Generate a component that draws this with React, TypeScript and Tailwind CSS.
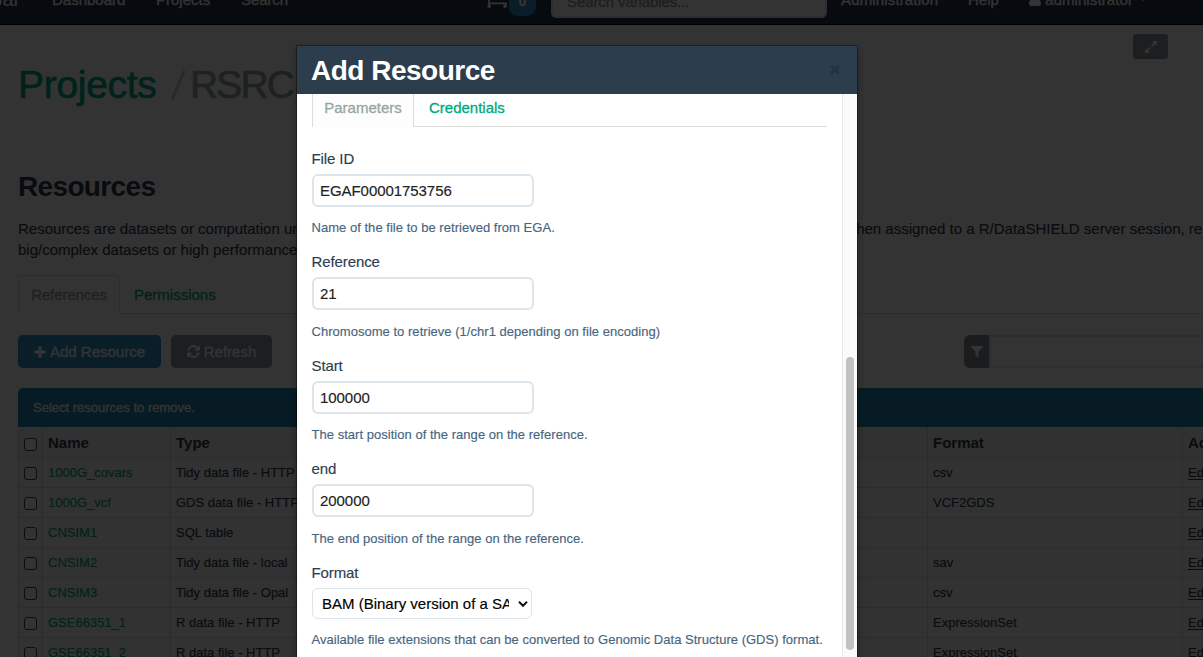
import React from "react";

const rows = [
  { name: "1000G_covars", type: "Tidy data file - HTTP", format: "csv" },
  { name: "1000G_vcf", type: "GDS data file - HTTP", format: "VCF2GDS" },
  { name: "CNSIM1", type: "SQL table", format: "" },
  { name: "CNSIM2", type: "Tidy data file - local", format: "sav" },
  { name: "CNSIM3", type: "Tidy data file - Opal", format: "csv" },
  { name: "GSE66351_1", type: "R data file - HTTP", format: "ExpressionSet" },
  { name: "GSE66351_2", type: "R data file - HTTP", format: "ExpressionSet" },
];

const fields = [
  { label: "File ID", value: "EGAF00001753756", help: "Name of the file to be retrieved from EGA." },
  { label: "Reference", value: "21", help: "Chromosome to retrieve (1/chr1 depending on file encoding)" },
  { label: "Start", value: "100000", help: "The start position of the range on the reference." },
  { label: "end", value: "200000", help: "The end position of the range on the reference." },
];

function RefreshIcon() {
  return (
    <svg className="mr-[4px] h-[15px] w-[13px] shrink-0" viewBox="0 0 1536 1792" fill="currentColor">
      <path d="M1511 1056q0 5-1 7-64 268-268 434.500t-478 166.500q-146 0-282.500-55t-243.500-157l-129 129q-19 19-45 19t-45-19-19-45v-448q0-26 19-45t45-19h448q26 0 45 19t19 45-19 45l-137 137q71 66 161 102t187 36q134 0 250-65t186-179q11-17 53-117 8-23 30-23h192q13 0 22.500 9.500t9.500 22.500zm25-800v448q0 26-19 45t-45 19h-448q-26 0-45-19t-19-45 19-45l138-138q-148-137-349-137-134 0-250 65t-186 179q-11 17-53 117-8 23-30 23h-199q-13 0-22.500-9.500t-9.500-22.500v-7q65-268 270-434.500t480-166.500q146 0 284 55.500t245 156.500l130-129q19-19 45-19t45 19 19 45z" />
    </svg>
  );
}

function NavBar() {
  return (
    <nav className="h-[25px] w-full overflow-hidden border-b border-black bg-[#26374d] text-white">
      <div className="-mt-[26px] flex h-[50px] items-center whitespace-nowrap [-webkit-text-stroke:0.3px]">
        <div className="flex w-[18px] justify-end text-[20px] [-webkit-text-stroke:0px]">
          <span>Opal</span>
        </div>
        <span className="ml-[34px] w-[104px]">Dashboard</span>
        <span className="w-[85px]">Projects</span>
        <span className="w-[246px] tracking-[-0.1px]">Search</span>
        <svg className="h-[18px] w-[20px]" viewBox="0 0 20 18" fill="none" stroke="currentColor" strokeWidth="1.800">
          <path d="M0 1h2v14M4 3h15l-1 6H3M2 13.300h17v2" />
          <circle cx="2.200" cy="16.200" r="1.800" fill="currentColor" stroke="none" />
          <circle cx="18" cy="16.200" r="1.800" fill="currentColor" stroke="none" />
        </svg>
        <span className="ml-[2px] mt-[2px] flex h-[32px] w-[27px] items-center justify-center rounded-[9px] bg-[#2c8fc4] pt-[3px] text-[14px] font-bold">
          0
        </span>
        <span className="ml-[15px] mt-[2px] flex h-[35px] w-[276px] items-center rounded-[5px] border-2 border-[#dce4ec] bg-white pl-[14px] pt-[2px] tracking-[-0.1px] text-[#8b979b]">
          Search variables...
        </span>
        <span className="ml-[14px] w-[127px] tracking-[0.15px]">Administration</span>
        <span className="w-[61px]">Help</span>
        <svg className="mt-[1px] h-[12px] w-[12px]" viewBox="0 0 12 12" fill="currentColor">
          <circle cx="6" cy="3" r="3" />
          <path d="M0 9.500C0 7 1.500 5.500 3 5.500h6c1.500 0 3 1.500 3 4 0 1.700-1 2.500-2.200 2.500H2.200C1 12 0 11.200 0 9.500Z" />
        </svg>
        <span className="ml-[4px] w-[94px] tracking-[0.1px]">administrator</span>
        <svg className="h-[4px] w-[8px]" viewBox="0 0 8 4" fill="currentColor">
          <path d="M0 0h8L4 4Z" />
        </svg>
      </div>
    </nav>
  );
}

function Check({ className = "mt-px" }: { className?: string }) {
  return (
    <span className={`block h-[13px] w-[13px] rounded-[3px] border border-[#404040] bg-white ${className}`} />
  );
}

function ResourceTable() {
  return (
    <div className="ml-[18px] w-[1240px] text-[13px]">
      <div className="grid h-[31px] grid-cols-[24px_128px_757px_255px_76px] border-b border-l border-[#dddddd] bg-[#f4f4f4] text-[15px] font-bold">
        <div className="flex items-center border-r border-[#dddddd] pl-[5px]"><Check className="mt-[5px]" /></div>
        <div className="flex items-center border-r border-[#dddddd] pl-[5px]">Name</div>
        <div className="flex items-center border-r border-[#dddddd] pl-[5px]">Type</div>
        <div className="flex items-center border-r border-[#dddddd] pl-[5px]">Format</div>
        <div className="flex items-center pl-[5px]">Actions</div>
      </div>
      {rows.map((r) => (
        <div
          key={r.name}
          className="grid h-[30px] grid-cols-[24px_128px_757px_255px_76px] border-b border-l border-[#dddddd] odd:bg-[#fbfbfb] even:bg-[#f7f7f7] [-webkit-text-stroke:0.15px]"
        >
          <div className="flex items-center border-r border-[#dddddd] pl-[5px]"><Check /></div>
          <div className="flex items-center border-r border-[#dddddd] pl-[5px] text-[#00aa80]">{r.name}</div>
          <div className="flex items-center border-r border-[#dddddd] pl-[5px]">{r.type}</div>
          <div className="flex items-center border-r border-[#dddddd] pl-[5px]">{r.format}</div>
          <div className="flex items-center pl-[5px] underline underline-offset-2">Edit</div>
        </div>
      ))}
    </div>
  );
}

function Page() {
  return (
    <div className="h-[657px] w-[1203px] overflow-hidden bg-white">
      <NavBar />
      <div className="flex h-[135px] justify-between pl-[18px] pr-[35px]">
        <h1 className="mt-[34px] flex h-[50px] items-center whitespace-nowrap text-[39px] tracking-[-0.3px] [-webkit-text-stroke:0.7px]">
          <span className="w-[153px] text-[#00aa80]">Projects</span>
          <svg className="mt-[1px] h-[30px] w-[15px]" viewBox="0 0 15 30">
            <path d="M1 29.500 13.500 0.500" stroke="#cccccc" strokeWidth="3" />
          </svg>
          <span className="ml-[4px] tracking-[-1.900px] text-[#95a5a6]">RSRC</span>
        </h1>
        <button className="mt-[9px] flex h-[25px] w-[35px] items-center justify-center rounded-[3px] bg-[#8b959a] text-white">
          <svg className="h-[14px] w-[12px]" viewBox="0 0 1536 1792" fill="currentColor">
            <path d="M755 1056q0 13-10 23l-332 332 144 144q19 19 19 45t-19 45-45 19h-448q-26 0-45-19t-19-45v-448q0-26 19-45t45-19 45 19l144 144 332-332q10-10 23-10t23 10l114 114q10 10 10 23zm781-864v448q0 26-19 45t-45 19-45-19l-144-144-332 332q-10 10-23 10t-23-10l-114-114q-10-10-10-23t10-23l332-332-144-144q-19-19-19-45t19-45 45-19h448q26 0 45 19t19 45z" />
          </svg>
        </button>
      </div>
      <h2 className="ml-[18px] mt-[11px] flex h-[30px] items-center text-[28px] font-bold tracking-[-0.650px]">Resources</h2>
      <div className="ml-[18px] mt-[17px] whitespace-nowrap leading-[21px] [-webkit-text-stroke:0.150px]">
        <div className="flex">
          <span className="w-[824px] shrink-0 overflow-hidden">
            Resources are datasets or computation units which location is described by a URL and access is protected by credentials.
          </span>
          <span>When assigned to a R/DataSHIELD server session, remote</span>
        </div>
        <div>big/complex datasets or high performance computers are made accessible to data analysts.</div>
      </div>
      <div className="ml-[18px] mt-[15px] flex h-[39px]">
        <div className="flex w-[102px] items-center justify-center rounded-t-[4px] border border-b-0 border-[#dddddd] pb-px tracking-[-0.1px] text-[#95a5a6] [-webkit-text-stroke:0.300px]">
          References
        </div>
        <div className="flex flex-1 items-center border-b border-[#dddddd] pl-[14px] text-[#00aa80] [-webkit-text-stroke:0.300px]">
          Permissions
        </div>
      </div>
      <div className="mt-[21px] flex h-[33px] whitespace-nowrap pl-[18px]">
        <button className="flex w-[143px] shrink-0 items-center justify-center rounded-[5px] bg-[#3498cb] text-white [-webkit-text-stroke:0.300px]">
          <svg className="mr-[4px] h-[12px] w-[12px] shrink-0" viewBox="0 0 12 12">
            <path d="M6 0.300v11.400M0.300 6h11.400" stroke="currentColor" strokeWidth="3" />
          </svg>
          Add Resource
        </button>
        <button className="ml-[10px] flex w-[101px] shrink-0 items-center justify-center rounded-[5px] bg-[#8b959a] text-white [-webkit-text-stroke:0.300px]">
          <RefreshIcon />
          Refresh
        </button>
        <div className="ml-[692px] flex w-[25px] shrink-0 items-center justify-center rounded-l-[6px] bg-[#838c91] text-white">
          <svg className="h-[12px] w-[12px]" viewBox="0 0 12 12" fill="currentColor">
            <path d="M0 0h12v1L7.500 5.600V12L4.500 9.300V5.600L0 1Z" />
          </svg>
        </div>
        <div className="w-[270px] shrink-0 border-2 border-[#dce4ec] bg-white" />
      </div>
      <div className="ml-[18px] mt-[20px] flex h-[39px] w-[1240px] items-center rounded-t-[5px] bg-[#2586b4] pl-[15px] text-[13px] text-white [-webkit-text-stroke:0.300px]">
        Select resources to remove.
      </div>
      <ResourceTable />
    </div>
  );
}

function Modal() {
  return (
    <div
      role="dialog"
      className="absolute left-[297px] top-[46px] flex h-[640px] w-[560px] flex-col bg-white shadow-[0_0_0_1px_rgba(0,0,0,0.35),0_3px_7px_rgba(0,0,0,0.4)]"
    >
      <div className="flex h-[48px] shrink-0 items-center justify-between bg-[#2c3e4e] pl-[14px] pr-[17px]">
        <h3 className="text-[28px] font-bold tracking-[-0.500px] text-white">Add Resource</h3>
        <svg className="h-[10px] w-[10px]" viewBox="0 0 10 10">
          <path d="M1 1l8 8M9 1l-8 8" stroke="#22323f" strokeWidth="2.600" />
        </svg>
      </div>
      <div className="flex flex-1">
        <div className="w-[545px] pl-[15px] pr-[15px]">
          <div className="flex h-[33px]">
            <div className="flex w-[102px] justify-center border-l border-r border-[#dddddd] bg-[#fdfdfd] pt-[3px] text-[#95a5a6] [-webkit-text-stroke:0.300px]">
              Parameters
            </div>
            <div className="flex-1 border-b border-[#dddddd] pl-[15px] pt-[3px] text-[#00aa80] [-webkit-text-stroke:0.300px]">
              Credentials
            </div>
          </div>
          <div className="mt-[20.500px] [-webkit-text-stroke:0.150px]">
            {fields.map((f) => (
              <div key={f.label} className="h-[103.500px]">
                <label className="-ml-[0.500px] block tracking-[-0.100px]">{f.label}</label>
                <input
                  readOnly
                  value={f.value}
                  className="mt-[5.250px] block h-[33px] w-[222px] rounded-[6px] border-2 border-[#dce4ec] bg-white px-[6px] tracking-[-0.060px] text-[#222222] outline-none"
                />
                <p className="-ml-[0.500px] mt-[11.250px] text-[13px] leading-[20px] tracking-[0.030px] text-[#476581]">{f.help}</p>
              </div>
            ))}
            <div>
              <label className="-ml-[0.500px] block tracking-[-0.100px]">Format</label>
              <div className="mt-[5.500px] flex h-[31px] w-[220px] items-center rounded-[6px] border border-[#dce4ec] pl-[9px] pr-[4px] text-black">
                <span className="w-[187px] shrink-0 overflow-hidden whitespace-nowrap">BAM (Binary version of a SAM)</span>
                <svg className="ml-[9px] h-[8px] w-[10px] shrink-0" viewBox="0 0 10 8">
                  <path d="M1 1.800 5 5.800 9 1.800" fill="none" stroke="#111111" strokeWidth="2" />
                </svg>
              </div>
              <p className="-ml-[0.500px] mt-[11px] whitespace-nowrap text-[13px] leading-[20px] tracking-[0.025px] text-[#476581]">
                Available file extensions that can be converted to Genomic Data Structure (GDS) format.
              </p>
            </div>
          </div>
        </div>
        <div className="w-[15px] border-l border-[#e8e8e8] bg-[#fafafa] pl-[3px] pt-[263px]">
          <div className="h-[293px] w-[8px] rounded-full bg-[#c1c1c1]" />
        </div>
      </div>
    </div>
  );
}

export default function App() {
  return (
    <div className="relative h-[657px] w-[1203px] overflow-hidden font-['Liberation_Sans',Arial,sans-serif] text-[15px] leading-[21px] text-[#2c3e50]">
      <Page />
      <div className="absolute inset-0 bg-black/80" />
      <Modal />
    </div>
  );
}
